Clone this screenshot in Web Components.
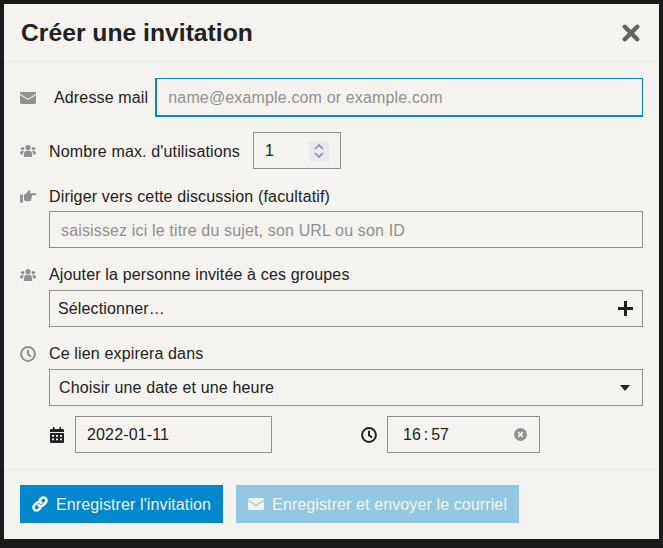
<!DOCTYPE html>
<html lang="fr"><head><meta charset="utf-8"><style>
html,body{margin:0;height:100%;background:#1a1a1a;overflow:hidden}
body{font-family:"Liberation Sans",Arial,sans-serif;font-size:16px;color:#222;padding:4px 4px 9px;box-sizing:border-box}
</style></head><body>
<invite-modal></invite-modal>
<script>
const I={
mail:'<svg viewBox="0 0 16 12"><path d="M0 1.2C0 .5.5 0 1.2 0h13.6c.7 0 1.2.5 1.2 1.2v.5L8 6.800 0 1.7z"/><path d="M0 3l8 5.100L16 3v7.800c0 .7-.5 1.200-1.200 1.200H1.200C.5 12 0 11.500 0 10.800z"/></svg>',
users:'<svg viewBox="0 0 16 12"><circle cx="8" cy="2.6" r="2.6"/><circle cx="2.6" cy="3.6" r="1.7"/><circle cx="13.4" cy="3.6" r="1.7"/><path d="M3.9 12V9.2C3.9 7 5.4 5.8 6.8 5.8h2.4c1.4 0 2.9 1.2 2.9 3.4V12z"/><path d="M0 8.6C0 7 .8 6 2 6h1.4c.3 0 .6.1.8.3C3.2 7 2.8 8.1 2.8 9.4H1C.4 9.4 0 9.1 0 8.6zM16 8.6C16 7 15.2 6 14 6h-1.4c-.3 0-.6.1-.8.3.9.7 1.4 1.8 1.4 3.1H15c.6 0 1-.3 1-.8z"/></svg>',
hand:'<svg viewBox="0 0 16 13"><path d="M0 4.6h3v8H0z"/><path d="M4 4.8c1.4-.4 2.4-1.4 3.2-2.6C7.9 1 8.600 0 9.700.3c.8.300.9 1.100.5 1.900l-.5 1H15c.6 0 1 .5 1 1s-.5 1-1 1h-3.100c.2.300.2.900-.1 1.300.2.500.1 1.100-.3 1.500.1.600 0 1.100-.4 1.500 0 1-.6 1.700-1.600 1.700H7.200c-1.400 0-2.300-.5-3.200-1z"/></svg>',
clock:'<svg viewBox="0 0 16 16" fill="none" stroke="currentColor"><circle cx="8" cy="8" r="6.900" stroke-width="2"/><path d="M8 3.800V8.300l3 2.200" stroke-width="2"/></svg>',
cal:'<svg viewBox="0 0 14 16"><path fill-rule="evenodd" d="M3 0h1.500v2h5V0H11v2h1.700C13.400 2 14 2.600 14 3.300V5H0V3.300C0 2.600.6 2 1.300 2H3zM0 6h14v8.700c0 .7-.6 1.300-1.300 1.300H1.300C.6 16 0 15.400 0 14.700zM2 8v1.700h2V8zm4 0v1.700h2V8zm4 0v1.700h2V8zM2 11.500v1.700h2v-1.700zm4 0v1.700h2v-1.700zm4 0v1.700h2v-1.700z"/></svg>',
link:'<svg viewBox="0 0 16 16" fill="none" stroke="currentColor" stroke-width="2.700" stroke-linecap="round"><path d="M6.700 9.300a3 3 0 0 0 4.300 0l2.600-2.600a3 3 0 0 0-4.300-4.300L8 3.700"/><path d="M9.300 6.700a3 3 0 0 0-4.300 0L2.400 9.300a3 3 0 0 0 4.300 4.300L8 12.300"/></svg>',
};
class El extends HTMLElement{
  constructor(){super();this.attachShadow({mode:'open'})}
}
class AppIcon extends El{
  connectedCallback(){const n=this.getAttribute('name');this.shadowRoot.innerHTML='<style>:host{display:inline-flex;align-items:center;justify-content:center;flex:none;fill:currentColor}svg{display:block;width:100%;height:auto}</style>'+I[n]}
}
class FormBox extends El{
  connectedCallback(){this.shadowRoot.innerHTML=`<style>:host{display:flex;align-items:center;box-sizing:border-box;height:37px;border:1px solid #919191;padding:0 11px;color:#222;font-size:16px;min-width:0}
  :host([focus]){height:39px;padding-left:12px;border-color:#0088cc;box-shadow:inset 1px 0 0 #08c,inset 0 -1px 0 #08c}
  :host([ph]){color:#919191}</style><slot></slot>`}
}
class AppButton extends El{
  connectedCallback(){this.shadowRoot.innerHTML=`<style>:host{display:inline-flex;align-items:center;gap:8px;height:38px;padding:0 12px;background:#0088cc;color:#f4f3ef;font-size:16px;box-sizing:border-box;white-space:nowrap;letter-spacing:.11px}
  :host([disabled]){background:#92c8e2}
  span{padding-top:2px}</style><slot name="icon"></slot><span><slot></slot></span>`}
}
class InviteModal extends El{
  connectedCallback(){this.shadowRoot.innerHTML=`<style>
  :host{display:block;width:655px;height:535px;background:#f4f3ef;box-sizing:border-box;color:#222;letter-spacing:.15px}
  header{display:flex;align-items:center;justify-content:space-between;height:58px;padding:0 19px 0 17px;box-sizing:border-box;border-bottom:1px solid #e9e8e4}
  h3{margin:0;padding-top:2px;font-size:24.7px;font-weight:700;line-height:1;color:#222;letter-spacing:0}
  .x{color:#646464;width:18px}
  main{height:408px;box-sizing:border-box;padding:16px 16px 0;border-bottom:1px solid #e9e8e4;display:flex;flex-direction:column}
  .row{display:flex;align-items:center}
  .ic{color:#919191;width:16px}
  .lab{line-height:19px}
  .with-ic{display:flex;align-items:center;gap:13px;height:19px}
  .ind{margin-left:29px}
  footer{display:flex;gap:13px;padding:15px 16px 0}
  .spin{margin-left:auto;width:20px;height:20px;background:#e9e8ee;display:flex;flex-direction:column;align-items:center;justify-content:center;gap:2px}
  .spin svg{width:10px;height:6px;display:block;fill:none;stroke:#919191;stroke-width:1.600}
  .end{margin-left:auto}
  .down{padding-top:2px}
  </style>
  <header><h3>Créer une invitation</h3><app-icon-x class="x"></app-icon-x></header>
  <main>
    <div class="row" style="height:39px"><app-icon name="mail" class="ic"></app-icon><span class="lab" style="margin-left:18px;margin-right:7px">Adresse mail</span><form-box focus ph style="flex:1">name@example.com or example.com</form-box></div>
    <div class="row" style="margin-top:15px;height:37px;gap:13px"><app-icon name="users" class="ic"></app-icon><span class="lab down">Nombre max. d'utilisations</span><form-box style="width:88px"><span>1</span><span class="spin"><svg viewBox="0 0 10 6"><path d="M1 5l4-4 4 4"/></svg><svg viewBox="0 0 10 6"><path d="M1 1l4 4 4-4"/></svg></span></form-box></div>
    <div class="with-ic" style="margin-top:18px"><app-icon name="hand" class="ic"></app-icon><span class="lab">Diriger vers cette discussion (facultatif)</span></div>
    <form-box ph class="ind down" style="margin-top:5px">saisissez ici le titre du sujet, son URL ou son ID</form-box>
    <div class="with-ic" style="margin-top:17px"><app-icon name="users" class="ic"></app-icon><span class="lab">Ajouter la personne invitée à ces groupes</span></div>
    <form-box class="ind" style="margin-top:6px;padding-left:8px">Sélectionner…<svg class="end" viewBox="0 0 15 15" width="15" height="15" style="margin-right:-2px"><path d="M6 0h3v6h6v3H9v6H6V9H0V6h6z" fill="#222"/></svg></form-box>
    <div class="with-ic" style="margin-top:17px"><app-icon name="clock" class="ic"></app-icon><span class="lab">Ce lien expirera dans</span></div>
    <form-box class="ind" style="margin-top:6px;padding-left:9px">Choisir une date et une heure<svg class="end" viewBox="0 0 10 6" width="10" height="6" style="margin-right:1px"><path d="M0 0h10L5 6z" fill="#222"/></svg></form-box>
    <div class="row" style="margin-top:10px;margin-left:30px"><app-icon name="cal" style="width:14px;color:#222"></app-icon><form-box style="width:197px;margin-left:11px">2022-01-11</form-box><app-icon name="clock" style="width:16px;color:#222;margin-left:89px"></app-icon><form-box style="width:153px;margin-left:10px;padding-left:15px;letter-spacing:0;word-spacing:-1.5px">16 : 57<svg class="end" viewBox="0 0 14 14" width="13" height="13" style="margin-right:1px"><circle cx="7" cy="7" r="7" fill="#919191"/><path d="M4.500 4.500l5 5M9.500 4.500l-5 5" stroke="#f4f3ef" stroke-width="1.900"/></svg></form-box></div>
  </main>
  <footer><app-button><app-icon slot="icon" name="link" style="width:16px"></app-icon>Enregistrer l'invitation</app-button><app-button disabled><app-icon slot="icon" name="mail" style="width:16px"></app-icon>Enregistrer et envoyer le courriel</app-button></footer>`}
}
class XIcon extends El{connectedCallback(){this.shadowRoot.innerHTML='<style>:host{display:block;line-height:0}svg{width:100%;height:auto}</style><svg viewBox="0 0 18 18"><path d="M2.800 2.800l12.400 12.400M15.200 2.800L2.800 15.200" stroke="currentColor" stroke-width="4.400" stroke-linecap="round" fill="none"/></svg>'}}
customElements.define('app-icon',AppIcon);
customElements.define('app-icon-x',XIcon);
customElements.define('form-box',FormBox);
customElements.define('app-button',AppButton);
customElements.define('invite-modal',InviteModal);
</script></body></html>
